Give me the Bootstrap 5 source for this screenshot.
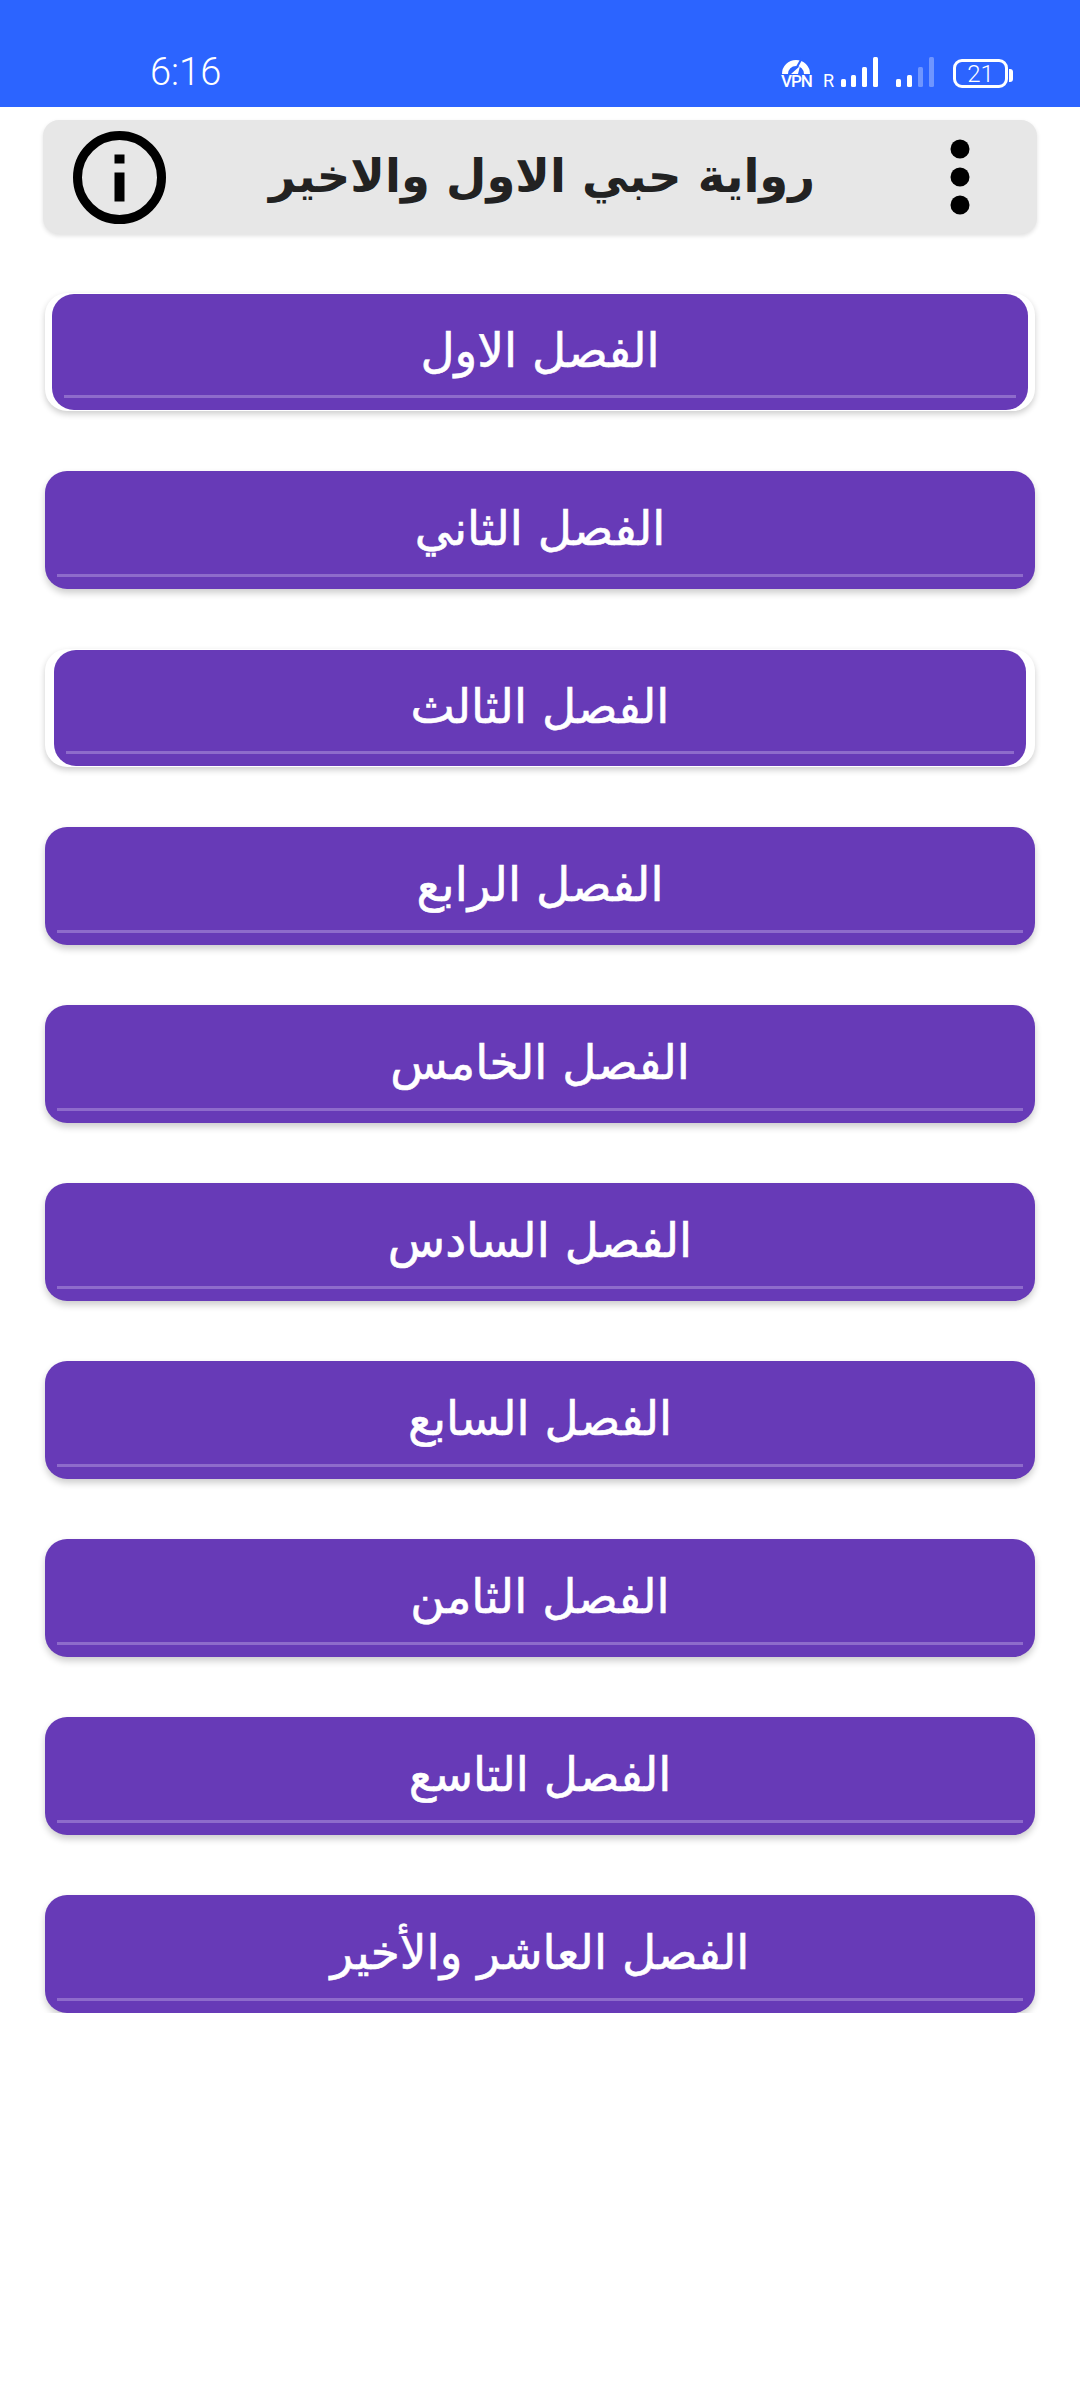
<!DOCTYPE html>
<html lang="ar">
<head>
  <meta charset="UTF-8">
  <meta name="viewport" content="width=device-width, initial-scale=1">
  <title>رواية حبي الاول والاخير</title>
  <link href="https://cdn.jsdelivr.net/npm/bootstrap@5.3.0/dist/css/bootstrap.min.css" rel="stylesheet">
  <style>
    body { background: #fff; font-family: "DejaVu Sans", sans-serif; }
    .status-strip { height: 107px; background: #2c64ff; padding: 0 72px 0 150px; color: #fff; }
    .clock { font-family: Roboto, sans-serif; font-weight: 300; font-size: 38px; line-height: 1; margin-top: 53px; }
    .status-icons { margin-top: 57px; height: 31px; }
    .vpn-mark { width: 30px; }
    .vpn-mark span { display: block; font-family: Roboto, sans-serif; font-weight: 500; font-size: 17px; line-height: 13px; text-align: center; letter-spacing: -1px; }
    .roam { font-family: Roboto, sans-serif; font-size: 18px; line-height: 14px; margin-left: 12px; margin-right: 7px; }
    .cell-gap { margin-left: 18px; margin-right: 19px; }
    .batt { width: 55px; height: 29px; border: 3px solid #fff; border-radius: 9px; font-family: Roboto, sans-serif; font-weight: 300; font-size: 24px; line-height: 1; }
    .batt::after { content: ""; position: absolute; right: -8px; top: 7px; width: 4px; height: 13px; background: #fff; border-radius: 0 3px 3px 0; }
    .title-bar { height: 114px; margin: 13px 43px 0; padding: 0 67px 0 30px; background: #e7e7e7; border-radius: 16px; box-shadow: 0 2px 4px rgba(0,0,0,.12); }
    .title-bar h1 { font-size: 46.5px; font-weight: 700; color: #222; margin: 0; transform: translateX(-16px); }
    .chapter-list { margin: 59px 45px 0; gap: 60px; }
    .chapter { height: 118px; padding: 0 0 2px; border: 0; border-radius: 22px; background: #673ab7; color: #fff; font-size: 47px; -webkit-text-stroke: .6px #fff; box-shadow: 0 4px 7px rgba(0,0,0,.2); }
    .chapter::after { content: ""; position: absolute; left: 12px; right: 12px; bottom: 12px; height: 3px; background: #8e6bcb; }
    .chapter:hover, .chapter:active { background: #673ab7; color: #fff; }
    .chapter-wrap { height: 118px; border-radius: 22px; background: #fff; box-shadow: 0 3px 6px rgba(0,0,0,.2); }
    .chapter-wrap .chapter { height: 116px; width: 100%; box-shadow: none; }
    .wrap-a { padding: 0 7px; }
    .wrap-b { padding: 0 9px; }
  </style>
</head>
<body>

  <div class="status-strip d-flex justify-content-between align-items-start">
    <div class="clock">6:16</div>
    <div class="status-icons d-flex align-items-end">
      <div class="vpn-mark">
        <svg class="d-block" width="30" height="18" viewBox="0 0 30 18">
          <path d="M1 17A14 14 0 0 1 29 17H23A8 8 0 0 0 7 17Z" fill="#fff"/>
          <path d="M10 17L19 9L17 17Z" fill="#fff"/>
          <path d="M16 10L21 1" stroke="#2c64ff" stroke-width="2"/>
        </svg>
        <span>VPN</span>
      </div>
      <span class="roam">R</span>
      <svg width="37" height="31" viewBox="0 0 37 31" class="d-block">
        <rect x="0" y="22" width="5" height="8" rx="1.5" fill="#fff"/>
        <rect x="10" y="18" width="5" height="12" rx="1.5" fill="#fff"/>
        <rect x="21" y="10" width="5" height="20" rx="1.5" fill="#fff"/>
        <rect x="32" y="0" width="5" height="30" rx="1.5" fill="#fff"/>
      </svg>
      <svg width="38" height="31" viewBox="0 0 38 31" class="d-block cell-gap">
        <rect x="0" y="22" width="5" height="8" rx="1.5" fill="#fff"/>
        <rect x="11" y="18" width="5" height="12" rx="1.5" fill="#fff"/>
        <rect x="22" y="10" width="5" height="20" rx="1.5" fill="#6f95ff"/>
        <rect x="33" y="0" width="5" height="30" rx="1.5" fill="#6f95ff"/>
      </svg>
      <div class="batt position-relative d-flex align-items-center justify-content-center">21</div>
    </div>
  </div>

  <div class="title-bar d-flex align-items-center justify-content-between">
    <svg width="93" height="93" viewBox="0 0 93 93" class="d-block">
      <circle cx="46.5" cy="46.5" r="42" fill="none" stroke="#000" stroke-width="9"/>
      <rect x="41.5" y="23.5" width="10" height="9" fill="#000"/>
      <rect x="41.5" y="41.5" width="10" height="29" fill="#000"/>
    </svg>
    <h1>رواية حبي الاول والاخير</h1>
    <svg width="20" height="76" viewBox="0 0 20 76" class="d-block">
      <circle cx="10" cy="10" r="9.5" fill="#000"/>
      <circle cx="10" cy="38" r="9.5" fill="#000"/>
      <circle cx="10" cy="66" r="9.5" fill="#000"/>
    </svg>
  </div>

  <div class="chapter-list d-flex flex-column">
    <div class="chapter-wrap wrap-a d-flex align-items-center"><button class="btn chapter position-relative">الفصل الاول</button></div>
    <button class="btn chapter position-relative">الفصل الثاني</button>
    <div class="chapter-wrap wrap-b d-flex align-items-center"><button class="btn chapter position-relative">الفصل الثالث</button></div>
    <button class="btn chapter position-relative">الفصل الرابع</button>
    <button class="btn chapter position-relative">الفصل الخامس</button>
    <button class="btn chapter position-relative">الفصل السادس</button>
    <button class="btn chapter position-relative">الفصل السابع</button>
    <button class="btn chapter position-relative">الفصل الثامن</button>
    <button class="btn chapter position-relative">الفصل التاسع</button>
    <button class="btn chapter position-relative">الفصل العاشر والأخير</button>
  </div>

</body>
</html>
